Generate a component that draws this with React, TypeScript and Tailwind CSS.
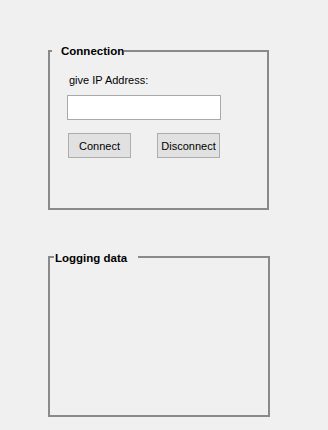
export default function App() {
  return (
    <div className="w-[328px] h-[430px] bg-[#f0f0f0] pt-[50px] pl-[48px] font-['Liberation_Sans',Arial,sans-serif] text-black">
      {/* Connection group */}
      <div className="relative w-[221px] h-[160px] border-2 border-[#8a8a8a]">
        <span className="absolute -top-[8px] left-[2px] pl-[9px] bg-[#f0f0f0] text-[11.5px] leading-[14px] font-bold">
          Connection
        </span>
        <div className="pt-[22px] pl-[17px] flex flex-col">
          <span className="pl-[2px] text-[11px] leading-[13px]">give IP Address:</span>
          <input
            type="text"
            className="mt-[8px] w-[154px] h-[25px] bg-white border border-[#a9a9a9] outline-none px-1 text-[11px]"
          />
          <div className="mt-[13px] flex gap-[26px] pl-[1px]">
            <button className="w-[63px] h-[25px] pt-[2px] bg-[#e1e1e1] border border-[#adadad] text-[11px]">
              Connect
            </button>
            <button className="w-[63px] h-[25px] pt-[2px] bg-[#e1e1e1] border border-[#adadad] text-[11px]">
              Disconnect
            </button>
          </div>
        </div>
      </div>

      {/* Logging group */}
      <div className="relative mt-[46px] w-[222px] h-[161px] border-2 border-[#8a8a8a]">
        <span className="absolute -top-[7px] left-[4px] pl-[1px] pr-[11px] bg-[#f0f0f0] text-[11.5px] leading-[14px] font-bold">
          Logging data
        </span>
      </div>
    </div>
  );
}
